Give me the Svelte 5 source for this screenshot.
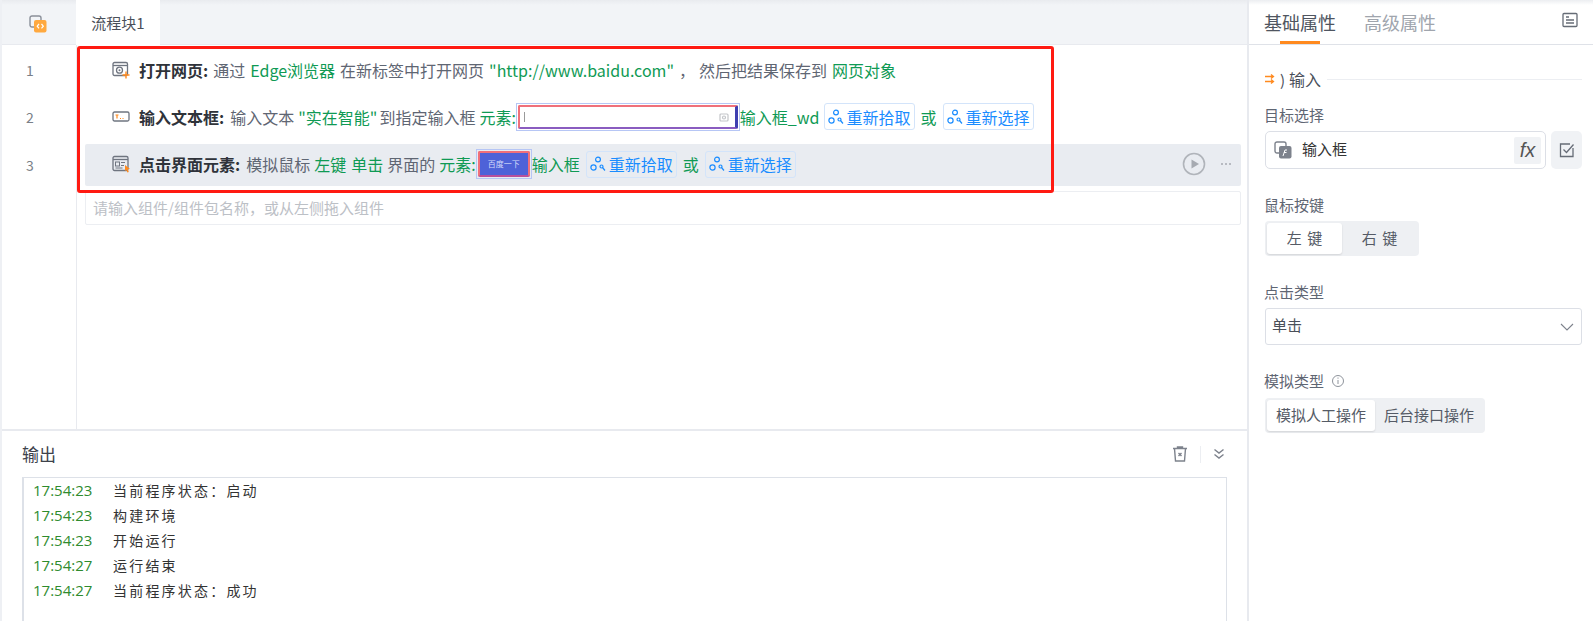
<script>
	const logs = [
		{ time: "17:54:23", text: "当前程序状态：启动" },
		{ time: "17:54:23", text: "构建环境" },
		{ time: "17:54:23", text: "开始运行" },
		{ time: "17:54:27", text: "运行结束" },
		{ time: "17:54:27", text: "当前程序状态：成功" },
	];
</script>

{#snippet pick()}
	<svg class="pick" viewBox="0 0 16 16" width="16" height="16" fill="none" stroke="#1a8cff" stroke-width="1.2">
		<circle cx="8" cy="3.5" r="2.4" />
		<circle cx="3.5" cy="11.5" r="2.6" />
		<circle cx="11.5" cy="10.5" r="1.5" />
		<path d="M12.5 11.5l2.5 3" />
	</svg>
{/snippet}

<div class="page">
	<div class="main">
		<div class="tabbar">
			<div class="tabicon">
				<svg viewBox="0 0 18 18" width="18" height="18" fill="none">
					<rect x="1" y="1" width="11" height="11" rx="2" stroke="#8a8f99" stroke-width="1.4" />
					<rect x="5" y="5" width="12.500" height="12.500" rx="2" fill="#ffa940" />
					<path d="M10 9l-1.800 2.200 1.800 2.200M12.500 9l1.800 2.200-1.800 2.200" stroke="#fff" stroke-width="1.2" />
				</svg>
			</div>
			<div class="tab">流程块1</div>
		</div>

		<div class="editor">
			<div class="rail">
				<div class="num n1">1</div>
				<div class="num n2">2</div>
				<div class="num n3">3</div>
			</div>
			<div class="flow">
				<div class="row r1">
					<svg class="rowicon" viewBox="0 0 18 18" width="18" height="18" fill="none">
						<rect x="1" y="1.5" width="14.5" height="13" rx="1.5" stroke="#6f7580" stroke-width="1.3" />
						<path d="M1 4.5h14.5" stroke="#6f7580" stroke-width="1.3" />
						<circle cx="7.5" cy="9.2" r="3" stroke="#6f7580" stroke-width="1.3" />
						<circle cx="7.5" cy="9.2" r="1" fill="#6f7580" />
						<path d="M14 10.5v7M10.5 14h7" stroke="#ff8a1f" stroke-width="1.4" />
					</svg>
					<b>打开网页:</b>
					<span>通过</span>
					<em>Edge浏览器</em>
					<span>在新标签中打开网页</span>
					<em>"http://www.baidu.com"</em>
					<span class="comma">，</span>
					<span>然后把结果保存到</span>
					<em>网页对象</em>
				</div>
				<div class="row r2">
					<svg class="rowicon" viewBox="0 0 18 18" width="18" height="18" fill="none">
						<rect x="1" y="4" width="16" height="9" rx="1.5" stroke="#6f7580" stroke-width="1.3" />
						<path d="M3.5 7h3M5 7v3.5" stroke="#ff8a1f" stroke-width="1.2" />
						<path d="M8 10.5h1M10.5 10.5h1" stroke="#ff8a1f" stroke-width="1" />
					</svg>
					<b>输入文本框:</b>
					<span>输入文本</span>
					<em class="quoted">"实在智能"</em>
					<span>到指定输入框</span>
					<em>元素:</em>
					<div class="shot shot-input">
						<div class="fake-input">
							<i class="caret"></i>
							<svg viewBox="0 0 10 10" width="10" height="10" fill="none" stroke="#c3c5c9" stroke-width="1.2">
								<rect x="1" y="2" width="8" height="7" rx="1" />
								<circle cx="5" cy="5.5" r="1.5" />
							</svg>
						</div>
					</div>
					<em class="tight">输入框_wd</em>
					<div class="btn">{@render pick()}重新拾取</div>
					<em class="or">或</em>
					<div class="btn">{@render pick()}重新选择</div>
				</div>
				<div class="row r3">
					<svg class="rowicon" viewBox="0 0 18 18" width="18" height="18" fill="none">
						<rect x="1" y="1.5" width="15" height="14" rx="1.5" stroke="#6f7580" stroke-width="1.3" />
						<path d="M1 4.5h15" stroke="#6f7580" stroke-width="1.3" />
						<rect x="3.5" y="7" width="4" height="4" stroke="#6f7580" />
						<path d="M9 7.5h4M9 10.5h3M3.5 13h7" stroke="#6f7580" />
						<path d="M13 10l5 4-2.2.3 1 2.7-1.4.5-1-2.6L13 16z" fill="#ff8a1f" />
					</svg>
					<b>点击界面元素:</b>
					<span>模拟鼠标</span>
					<em class="wide">左键</em>
					<em>单击</em>
					<span>界面的</span>
					<em>元素:</em>
					<div class="shot shot-button"><div class="fake-button">百度一下</div></div>
					<em class="tight">输入框</em>
					<div class="btn">{@render pick()}重新拾取</div>
					<em class="or">或</em>
					<div class="btn">{@render pick()}重新选择</div>
					<div class="actions">
						<svg viewBox="0 0 24 24" width="24" height="24" fill="none">
							<circle cx="12" cy="12" r="10.5" stroke="#b0b4ba" stroke-width="1.6" />
							<path d="M9.5 7.5l7.5 4.5-7.5 4.5z" fill="#a6aab1" />
						</svg>
						<div class="dots"><i></i><i></i><i></i></div>
					</div>
				</div>
				<div class="search">请输入组件/组件包名称，或从左侧拖入组件</div>
			</div>
			<div class="redbox"></div>
		</div>

		<div class="output">
			<div class="outhead">
				<h3>输出</h3>
				<div class="outtools">
					<svg viewBox="0 0 16 16" width="16" height="16" fill="none" stroke="#7d828c" stroke-width="1.4">
						<path d="M1 2.500h14M5.500 2.500V1h5v1.500M2.500 2.500L3.500 15h9l1-12.500" />
						<path d="M6.500 7l3 3M9.500 7l-3 3" />
					</svg>
					<i class="sep"></i>
					<svg viewBox="0 0 12 12" width="12" height="12" fill="none" stroke="#7d828c" stroke-width="1.4">
						<path d="M1.500 1.500L6 5l4.500-3.500M1.500 6.500L6 10l4.500-3.500" />
					</svg>
				</div>
			</div>
			<div class="log">
				{#each logs as l}
					<div class="logline"><time>{l.time}</time><span>{l.text}</span></div>
				{/each}
			</div>
		</div>
	</div>

	<aside class="side">
		<div class="sidetabs">
			<div class="stab active">基础属性</div>
			<div class="stab">高级属性</div>
			<svg class="doc" viewBox="0 0 16 16" width="16" height="16" fill="none" stroke="#666c76" stroke-width="1.3">
				<rect x="1" y="1.5" width="14" height="13" rx="1" />
				<path d="M4 5h3M4 8h8M4 11h8" />
			</svg>
		</div>
		<div class="form">
			<div class="section">
				<svg viewBox="0 0 12 12" width="12" height="12" fill="none" stroke="#ff8a1f" stroke-width="1.3">
					<path d="M0 3.500h8M6 1.500l2.500 2L6 5.500M0 8.500h8M6 6.500l2.500 2L6 10.500" />
				</svg>
				<span class="paren">)</span>
				<span class="stitle">输入</span>
				<i class="rule"></i>
			</div>
			<label class="lbl l1" for="target">目标选择</label>
			<div class="targetrow">
				<div class="target" id="target">
					<svg viewBox="0 0 18 18" width="18" height="18" fill="none">
						<rect x="1" y="1" width="11" height="11" rx="2" stroke="#7d828c" stroke-width="1.4" />
						<rect x="5" y="5" width="12.500" height="12.500" rx="2" fill="#7d828c" />
						<path d="M9 15l2-6h2M10 11.500h2.500" stroke="#fff" />
					</svg>
					<span class="tname">输入框</span>
					<div class="fx">fx</div>
				</div>
				<div class="check">
					<svg viewBox="0 0 16 16" width="16" height="16" fill="none" stroke="#666c76" stroke-width="1.3">
						<path d="M14 6v8.500H1.500V2H11" />
						<path d="M4.500 7.500L7.500 10.500 14.500 2.500" />
					</svg>
				</div>
			</div>
			<div class="lbl l2">鼠标按键</div>
			<div class="seg seg-mouse">
				<div class="opt on">左 键</div>
				<div class="opt">右 键</div>
			</div>
			<div class="lbl l3">点击类型</div>
			<div class="select">
				<span>单击</span>
				<svg viewBox="0 0 14 8" width="14" height="8" fill="none" stroke="#7d828c" stroke-width="1.1">
					<path d="M1 1l6 6 6-6" />
				</svg>
			</div>
			<div class="lbl l4">
				模拟类型
				<svg viewBox="0 0 14 14" width="14" height="14" fill="none" stroke="#8f949c">
					<circle cx="7" cy="7" r="5.500" />
					<path d="M7 6v4M7 3.500v1.200" />
				</svg>
			</div>
			<div class="seg seg-mode">
				<div class="opt on">模拟人工操作</div>
				<div class="opt">后台接口操作</div>
			</div>
		</div>
	</aside>
</div>

<style>
	:global(body) {
		background: #fff;
	}

	.page {
		display: flex;
		width: 1593px;
		height: 621px;
		overflow: hidden;
		font-family: "Noto Sans CJK SC", sans-serif;
		font-size: 16px;
		color: #5f6673;
	}

	.main {
		width: 1249px;
		flex: none;
		display: flex;
		flex-direction: column;
		border-left: 2px solid #eef0f4;
		border-right: 2px solid #e8eaef;
		box-sizing: border-box;
	}

	.tabbar {
		height: 45px;
		flex: none;
		display: flex;
		background: linear-gradient(#e9ebef, #f2f4f7 5px);
		border-bottom: 1px solid #e8eaef;
		box-sizing: border-box;
	}

	.tabicon {
		width: 74px;
		display: flex;
		align-items: center;
		justify-content: center;
		padding: 3px 3px 0 0;
		box-sizing: border-box;
	}

	.tab {
		width: 84px;
		background: #fff;
		color: #4a4f59;
		font-size: 15px;
		display: flex;
		align-items: center;
		justify-content: center;
		margin-bottom: -1px;
	}

	.editor {
		flex: 1;
		display: flex;
		position: relative;
		min-height: 0;
	}

	.rail {
		width: 75px;
		flex: none;
		border-right: 1px solid #e8eaef;
		box-sizing: border-box;
		color: #7a7f88;
		text-align: center;
		font-size: 14px;
		padding-top: 1px;
		padding-right: 18px;
	}

	.num {
		line-height: 24px;
	}
	.n1 {
		margin-top: 12px;
	}
	.n2 {
		margin-top: 23px;
	}
	.n3 {
		margin-top: 24px;
	}

	.flow {
		flex: 1;
		min-width: 0;
		padding: 1px 6px 0 8px;
	}

	.row {
		display: flex;
		align-items: center;
		gap: 4px;
		padding-left: 27px;
		white-space: nowrap;
		line-height: 22px;
	}
	.r1 {
		height: 47px;
		gap: 5px;
	}
	.r2 {
		height: 47px;
	}
	.r2 b,
	.r3 b {
		margin-right: 2px;
	}
	.r3 {
		height: 42px;
		margin-top: 4px;
		background: #e9ecf1;
		border-radius: 2px;
		padding-right: 10px;
		padding-bottom: 2px;
		box-sizing: border-box;
	}

	.rowicon {
		flex: none;
		margin-right: 5px;
	}
	.r1 .rowicon {
		margin-right: 4px;
	}

	b {
		font-weight: 700;
		color: #2f333a;
	}

	em {
		font-style: normal;
		color: #0f9a54;
	}

	.quoted {
		margin-right: -2px;
	}

	.wide {
		margin-right: 1px;
	}

	.comma {
		margin-right: -1px;
	}

	.tight {
		margin-left: -4px;
	}
	.r3 .tight {
		margin-right: 2px;
	}

	.or {
		margin: 0 2px;
	}

	.btn {
		display: flex;
		align-items: center;
		gap: 3px;
		height: 27px;
		padding: 0 3px;
		border: 1px solid #d3e4fa;
		border-radius: 3px;
		color: #1a8cff;
		box-sizing: border-box;
	}

	.shot {
		flex: none;
		padding: 1px;
		border: 1px solid #b6c6f5;
		box-sizing: border-box;
		margin-left: -4px;
	}

	.fake-input {
		width: 220px;
		height: 24px;
		box-sizing: border-box;
		background: #fff;
		border: 2px solid #f0707a;
		border-right: 3px solid #3f3fb0;
		border-bottom-color: #8a5cc0;
		border-radius: 2px;
		display: flex;
		align-items: center;
		justify-content: space-between;
		padding: 0 6px 0 4px;
	}

	.caret {
		width: 1px;
		height: 10px;
		background: #9a9a9a;
	}

	.fake-button {
		width: 52px;
		height: 26px;
		box-sizing: border-box;
		border: 2px solid #f0707a;
		border-bottom-color: #b8509c;
		border-radius: 2px;
		background: #4e62d8;
		color: #d4dafa;
		font-size: 8px;
		display: flex;
		align-items: center;
		justify-content: center;
	}

	.actions {
		margin-left: auto;
		display: flex;
		align-items: center;
		gap: 15px;
		margin-right: 0;
	}

	.dots {
		display: flex;
		gap: 2px;
	}
	.dots i {
		width: 2px;
		height: 2px;
		background: #a6aab1;
		border-radius: 50%;
	}

	.search {
		margin-top: 5px;
		height: 34px;
		box-sizing: border-box;
		border: 1px solid #eceef2;
		border-radius: 2px;
		padding-left: 7px;
		font-size: 15px;
		line-height: 31px;
		color: #bcc0c6;
	}

	.redbox {
		position: absolute;
		left: 75px;
		top: 1px;
		width: 977px;
		height: 147px;
		box-sizing: border-box;
		border: 3px solid #ff1a12;
		border-radius: 3px;
		pointer-events: none;
	}

	.output {
		height: 192px;
		flex: none;
		border-top: 2px solid #e8eaef;
		box-sizing: border-box;
		padding: 0 20px;
	}

	.outhead {
		height: 46px;
		display: flex;
		align-items: center;
		justify-content: space-between;
	}

	h3 {
		margin: -2px 0 0;
		font-size: 17px;
		font-weight: 400;
		color: #3d424b;
	}

	.outtools {
		display: flex;
		align-items: center;
		gap: 12px;
		margin-right: 2px;
	}

	.sep {
		width: 1px;
		height: 17px;
		background: #eceef2;
	}

	.log {
		height: 200px;
		border: 2px solid #dde1e8;
		border-width: 1px 1px 0 2px;
	}

	.logline {
		display: flex;
		height: 25px;
		align-items: center;
		padding: 0 0 2px 9px;
		box-sizing: border-box;
		color: #333;
		font-size: 14px;
		letter-spacing: 2.2px;
	}

	time {
		width: 80px;
		flex: none;
		color: #2e8b2e;
		font-family: "Open Sans", sans-serif;
		font-size: 15px;
		letter-spacing: 0;
	}

	.side {
		flex: 1;
		min-width: 0;
	}

	.sidetabs {
		height: 45px;
		display: flex;
		align-items: center;
		gap: 28px;
		padding: 0 11px 0 15px;
		box-sizing: border-box;
		border-bottom: 1px solid #dfe2e8;
		background: linear-gradient(#eceef1, #fff 5px);
	}

	.stab {
		font-size: 18px;
		color: #a0a5ad;
		position: relative;
		line-height: 44px;
	}

	.stab.active {
		color: #4f5560;
	}

	.stab.active::after {
		content: "";
		position: absolute;
		left: 16px;
		right: 16px;
		bottom: 0;
		height: 3px;
		background: #ff8a1f;
	}

	.doc {
		margin-left: auto;
		margin-top: -4px;
		margin-right: 4px;
	}

	.form {
		padding: 0 11px 0 16px;
	}

	.section {
		display: flex;
		align-items: center;
		height: 24px;
		margin-top: 22px;
		color: #4a4f59;
	}

	.paren {
		margin: 0 4px 0 3px;
		font-size: 15px;
	}

	.stitle {
		font-size: 16px;
	}

	.rule {
		flex: 1;
		height: 1px;
		margin-left: 6px;
		background: #eceef2;
	}

	.lbl {
		display: flex;
		align-items: center;
		gap: 7px;
		color: #5f6673;
		font-size: 15px;
		line-height: 20px;
		height: 20px;
		margin-bottom: 6px;
		margin-left: -1px;
	}
	.l1 {
		margin-top: 14px;
	}
	.l2 {
		margin-top: 26px;
	}
	.l3 {
		margin-top: 26px;
	}
	.l4 {
		margin-top: 26px;
		margin-bottom: 7px;
	}

	.targetrow {
		display: flex;
		gap: 5px;
		height: 38px;
	}

	.target {
		flex: 1;
		display: flex;
		align-items: center;
		border: 1px solid #dcdfe6;
		border-radius: 5px;
		padding: 0 4px 0 8px;
		color: #333;
		font-size: 15px;
		line-height: 34px;
	}

	.tname {
		margin: -2px 0 0 10px;
	}

	.fx {
		margin-left: auto;
		width: 27px;
		height: 27px;
		background: #f0f2f5;
		border-radius: 2px;
		color: #555;
		font-family: "Liberation Sans", sans-serif;
		font-style: italic;
		font-size: 20px;
		line-height: 26px;
		text-align: center;
	}

	.check {
		width: 31px;
		background: #f0f2f5;
		border-radius: 5px;
		display: flex;
		align-items: center;
		justify-content: center;
	}

	.seg {
		display: inline-flex;
		background: #eef0f3;
		border-radius: 4px;
		padding: 2px;
		box-sizing: border-box;
		font-size: 15px;
	}

	.seg-mouse {
		height: 35px;
	}
	.seg-mouse .opt {
		width: 75px;
		word-spacing: 2px;
	}

	.seg-mode {
		height: 35px;
	}
	.seg-mode .opt {
		width: 108px;
	}

	.opt {
		display: flex;
		align-items: center;
		justify-content: center;
		color: #555b66;
		border-radius: 3px;
		padding-bottom: 2px;
		box-sizing: border-box;
	}

	.opt.on {
		background: #fff;
		box-shadow: 0 1px 2px rgba(0, 0, 0, 0.12);
	}

	.select {
		height: 37px;
		box-sizing: border-box;
		border: 1px solid #dcdfe6;
		border-radius: 3px;
		display: flex;
		align-items: center;
		justify-content: space-between;
		padding: 0 7px 4px 6px;
		font-size: 15px;
		color: #4a4f59;
	}

	.select svg {
		margin-top: 4px;
	}
</style>
